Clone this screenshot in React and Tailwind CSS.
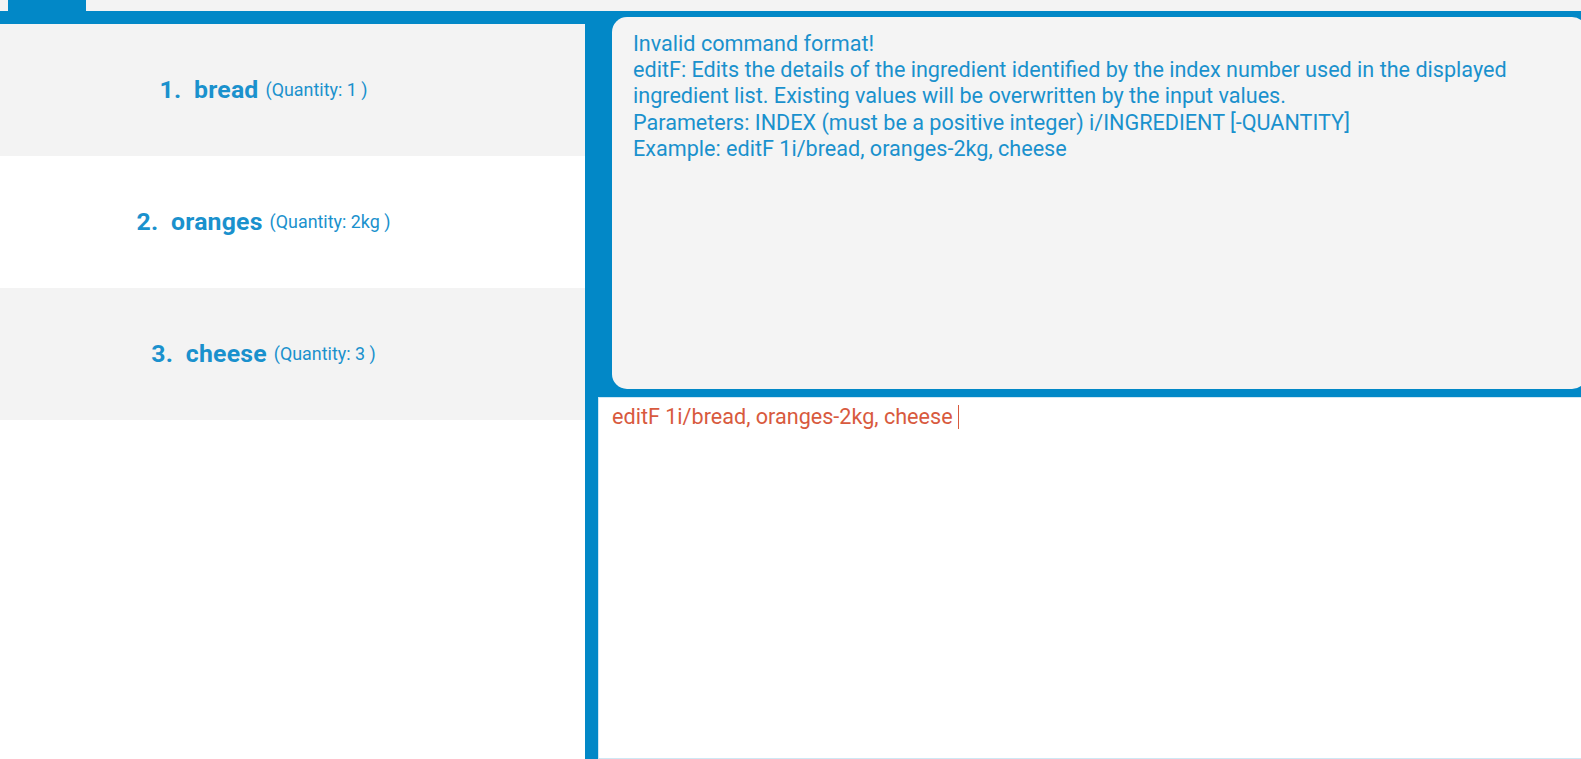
const ingredients = [
  { name: "bread", qty: "1" },
  { name: "oranges", qty: "2kg" },
  { name: "cheese", qty: "3" },
];

function IngredientCard({ index, name, qty }) {
  const shaded = index % 2 === 1;
  return (
    <div
      className={`h-[132px] flex items-center justify-center pr-[58px] ${shaded ? "bg-[#f3f3f3]" : "bg-white"}`}
    >
      <span className="text-[24.8px] font-bold text-[#1a91cd] tracking-[0.2px]">
        {index}.&nbsp;&nbsp;{name}
      </span>
      <span className="ml-[7px] text-[17.9px] text-[#1a91cd]">(Quantity: {qty} )</span>
    </div>
  );
}

export default function App() {
  return (
    <div className="w-[1581px] h-[759px] overflow-hidden bg-[#f3f3f3] flex flex-col font-['Roboto',sans-serif]">
      {/* Menu strip */}
      <div className="h-[11px] shrink-0 flex">
        <div className="ml-[8px] w-[78px] bg-[#0288c7]"></div>
      </div>

      <div className="flex-1 flex bg-[#0288c7] min-h-0">
        {/* Ingredient list */}
        <div className="w-[585px] shrink-0 mt-[13px] bg-white">
          {ingredients.map((item, i) => (
            <IngredientCard key={item.name} index={i + 1} name={item.name} qty={item.qty} />
          ))}
        </div>

        {/* Result + command */}
        <div className="flex-1 flex flex-col pl-[13px] pt-[6px] mr-[-6px] min-w-0">
          <div className="ml-[14px] h-[372px] shrink-0 rounded-[15px] bg-[#f4f4f4] pl-[21px] pt-[14px] text-[21.6px] leading-[26.2px] text-[#1a91cd]">
            <div>Invalid command format!</div>
            <div>editF: Edits the details of the ingredient identified by the index number used in the displayed</div>
            <div>ingredient list. Existing values will be overwritten by the input values.</div>
            <div>Parameters: INDEX (must be a positive integer) i/INGREDIENT [-QUANTITY]</div>
            <div>Example: editF 1i/bread, oranges-2kg, cheese</div>
          </div>
          <div className="mt-[8px] flex-1 bg-white border border-[#cfe7f4] pl-[13px] pt-[6px]">
            <div className="flex items-center h-[26px] text-[21.6px] text-[#d85a3e]">
              <span>editF 1i/bread, oranges-2kg, cheese</span>
              <span className="ml-[5px] w-px h-[24px] bg-[#d85a3e]"></span>
            </div>
          </div>
        </div>
      </div>
    </div>
  );
}
